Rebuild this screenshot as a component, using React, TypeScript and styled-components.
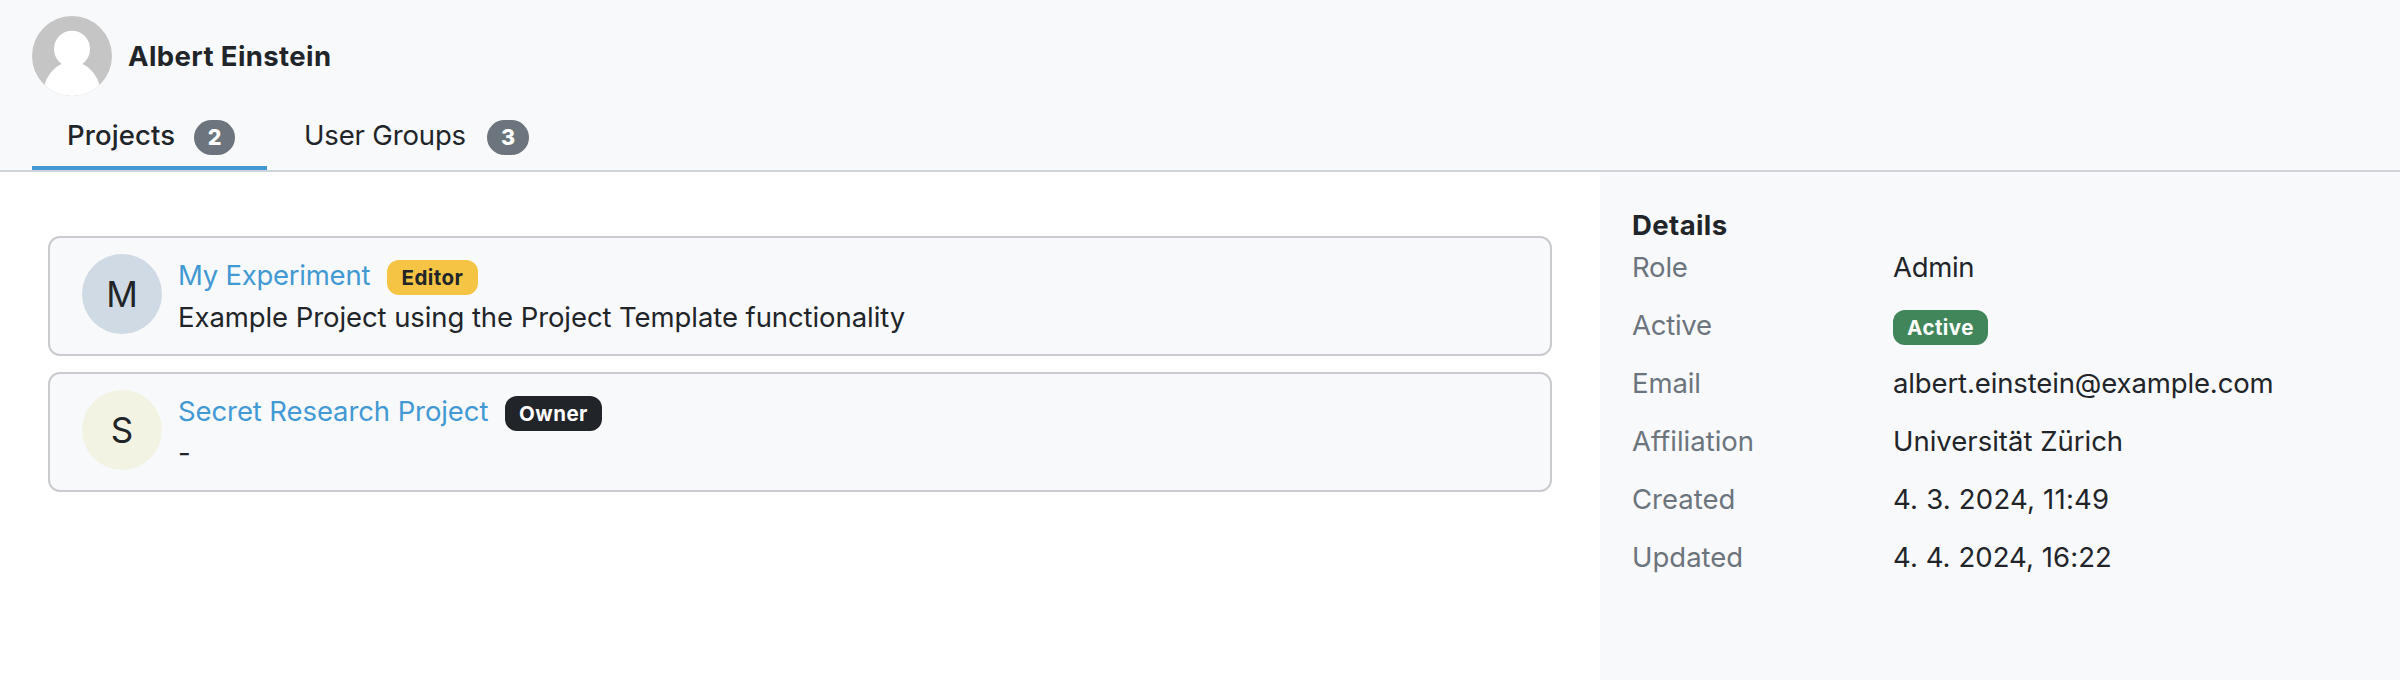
import React from 'react';
import styled, { createGlobalStyle } from 'styled-components';

const GlobalStyle = createGlobalStyle`
  * { box-sizing: border-box; }
  body {
    margin: 0;
    background: #fff;
    color: #212529;
    font-family: Inter, "Liberation Sans", sans-serif;
    font-size: 27.5px;
    line-height: 43px;
    font-kerning: normal;
  }
`;

const Page = styled.div`
  display: flex;
  flex-direction: column;
  height: 680px;
  white-space: nowrap;
`;

const Header = styled.header`
  display: flex;
  flex-direction: column;
  height: 172px;
  padding: 16px 32px 0;
  background: #f8f9fb;
  border-bottom: 2px solid #ced4da;
`;

const UserBar = styled.div`
  display: flex;
  align-items: center;
  gap: 16px;
  height: 80px;
`;

const UserPicture = styled.svg`
  width: 80px;
  height: 80px;
`;

const Label = styled.span<{ $spacing?: number }>`
  letter-spacing: ${(p) => p.$spacing ?? 0}px;
`;

const UserName = styled.h1`
  margin: 0;
  padding-top: 1px;
  font-size: 27.5px;
  font-weight: 700;
  letter-spacing: 0.4px;
`;

const Tabs = styled.nav`
  display: flex;
  flex: 1;
  padding-top: 18px;
`;

const Tab = styled.div<{ $active?: boolean; $width: number; $inset: number }>`
  display: flex;
  justify-content: space-between;
  width: ${(p) => p.$width}px;
  height: 56px;
  padding: 0 32px 0 ${(p) => p.$inset}px;
  border-bottom: 4px solid ${(p) => (p.$active ? '#4299d4' : 'transparent')};
  font-weight: ${(p) => (p.$active ? 500 : 400)};
`;

const tones = {
  neutral: ['#6c757d', '#fff'],
  warning: ['#f6c445', '#212529'],
  dark: ['#212529', '#fff'],
  success: ['#41865a', '#fff'],
};

const Badge = styled.span<{ $tone: keyof typeof tones; $width: number; $pill?: boolean }>`
  display: flex;
  align-items: center;
  justify-content: center;
  width: ${(p) => p.$width}px;
  height: 35px;
  margin-top: 6px;
  border-radius: ${(p) => (p.$pill ? 18 : 12)}px;
  background: ${(p) => tones[p.$tone][0]};
  color: ${(p) => tones[p.$tone][1]};
  font-size: ${(p) => (p.$pill ? 21.5 : 20.5)}px;
  font-weight: ${(p) => (p.$pill ? 800 : 700)};
  line-height: 21px;
  letter-spacing: ${(p) => (p.$pill ? 0 : 0.45)}px;
`;

const Body = styled.div`
  display: flex;
  flex: 1;
`;

const ProjectList = styled.main`
  display: flex;
  flex-direction: column;
  gap: 16px;
  width: 1600px;
  padding: 64px 48px;
`;

const Card = styled.article`
  display: flex;
  gap: 16px;
  height: 120px;
  padding: 16px 32px;
  border: 2px solid #c9cbce;
  border-radius: 12px;
  background: #f8f9fb;
`;

const Initial = styled.div<{ $color: string }>`
  display: flex;
  align-items: center;
  justify-content: center;
  width: 80px;
  height: 80px;
  border-radius: 50%;
  background: ${(p) => p.$color};
  font-size: 35px;
`;

const TitleRow = styled.div`
  display: flex;
  gap: 16px;
  height: 42px;
`;

const ProjectLink = styled.a<{ $width: number; $spacing: number }>`
  width: ${(p) => p.$width}px;
  letter-spacing: ${(p) => p.$spacing}px;
  color: #4299d4;
`;

const Description = styled.div`
  letter-spacing: -0.08px;
`;

const Sidebar = styled.aside`
  flex: 1;
  padding: 32px;
  background: #f8f9fb;
`;

const SidebarTitle = styled.h2`
  height: 42px;
  margin: 0;
  font-size: 27.5px;
  font-weight: 700;
  letter-spacing: 0.4px;
`;

const DetailRow = styled.div`
  display: grid;
  grid-template-columns: 261px 1fr;
  height: 58px;
`;

const Term = styled.span<{ $spacing?: number }>`
  color: #6c757d;
  letter-spacing: ${(p) => p.$spacing ?? 0}px;
`;

const projects = [
  { initial: 'M', color: '#d0dae4', name: 'My Experiment', width: 193, spacing: -0.25, role: 'Editor', tone: 'warning' as const, badge: 91, text: 'Example Project using the Project Template functionality' },
  { initial: 'S', color: '#f2f3e2', name: 'Secret Research Project', width: 311, spacing: -0.1, role: 'Owner', tone: 'dark' as const, badge: 97, text: '-' },
];

const details: { term: string; value: React.ReactNode; ts?: number; vs?: number }[] = [
  { term: 'Role', value: 'Admin', ts: -0.2, vs: -0.3 },
  { term: 'Active', value: <Badge $tone="success" $width={95}>Active</Badge>, ts: -0.25 },
  { term: 'Email', value: 'albert.einstein@example.com', ts: -0.1, vs: -0.13 },
  { term: 'Affiliation', value: 'Universität Zürich' },
  { term: 'Created', value: '4. 3. 2024, 11:49', vs: 0.22 },
  { term: 'Updated', value: '4. 4. 2024, 16:22', vs: 0.07 },
];

export default function App() {
  return (
    <Page>
      <GlobalStyle />
      <Header>
        <UserBar>
          <UserPicture viewBox="0 0 80 80">
            <clipPath id="round"><circle cx="40" cy="40" r="40" /></clipPath>
            <g clipPath="url(#round)">
              <rect width="80" height="80" fill="#c5c5c5" />
              <ellipse cx="40" cy="33" rx="18" ry="18.300" fill="#fff" />
              <path d="M11.500 72C14.500 60 21.500 51 31 47.500H49C58.500 51 65.500 60 68.500 72V80H11.500Z" fill="#fff" />
            </g>
          </UserPicture>
          <UserName>Albert Einstein</UserName>
        </UserBar>
        <Tabs>
          <Tab $active $width={235} $inset={35}>
            <Label $spacing={0.1}>Projects</Label>
            <Badge $tone="neutral" $width={41} $pill>2</Badge>
          </Tab>
          <Tab $width={294} $inset={37}>
            <Label $spacing={-0.15}>User Groups</Label>
            <Badge $tone="neutral" $width={42} $pill>3</Badge>
          </Tab>
        </Tabs>
      </Header>
      <Body>
        <ProjectList>
          {projects.map((p) => (
            <Card key={p.name}>
              <Initial $color={p.color}>{p.initial}</Initial>
              <div>
                <TitleRow>
                  <ProjectLink $width={p.width} $spacing={p.spacing}>{p.name}</ProjectLink>
                  <Badge $tone={p.tone} $width={p.badge}>{p.role}</Badge>
                </TitleRow>
                <Description>{p.text}</Description>
              </div>
            </Card>
          ))}
        </ProjectList>
        <Sidebar>
          <SidebarTitle>Details</SidebarTitle>
          {details.map((d) => (
            <DetailRow key={d.term}>
              <Term $spacing={d.ts}>{d.term}</Term>
              <Label $spacing={d.vs}>{d.value}</Label>
            </DetailRow>
          ))}
        </Sidebar>
      </Body>
    </Page>
  );
}
